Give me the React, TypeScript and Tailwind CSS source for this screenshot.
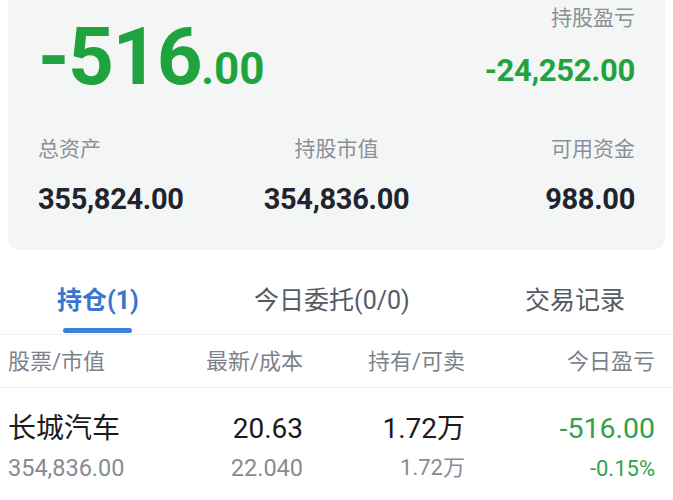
import React from "react";

const font = "font-['Roboto','Noto_Sans_CJK_SC',sans-serif]";

type Holding = {
  name: string;
  value: string;
  price: string;
  cost: string;
  hold: string;
  sell: string;
  pnl: string;
  pct: string;
};

const holdings: Holding[] = [
  {
    name: "长城汽车",
    value: "354,836.00",
    price: "20.63",
    cost: "22.040",
    hold: "1.72万",
    sell: "1.72万",
    pnl: "-516.00",
    pct: "-0.15%",
  },
];

const SummaryCard: React.FC = () => {
  return (
    <div className="mx-2 h-[250px] rounded-b-xl bg-[#f4f6f5] pl-[30px] pr-[30px]">
      <div className="flex items-start justify-between">
        <div className="pt-[17px] text-[#1fa33e] font-bold leading-none">
          <span className="text-[80px] tracking-[-1.5px]">-516</span>
          <span className="text-[44px]">.00</span>
        </div>
        <div className="flex flex-col items-end pt-[8px]">
          <span className="text-[21px] leading-none text-[#8a8f98]">
            持股盈亏
          </span>
          <span className="mt-[26px] text-[31px] font-bold leading-none tracking-[-0.3px] text-[#22a33f]">
            -24,252.00
          </span>
        </div>
      </div>
      <div className="mt-[42px] grid grid-cols-3">
        <div className="flex flex-col items-start">
          <span className="text-[21px] leading-none text-[#8a8f98]">总资产</span>
          <span className="mt-[25px] text-[29px] font-bold leading-none tracking-[-0.3px] text-[#1f2430]">
            355,824.00
          </span>
        </div>
        <div className="flex flex-col items-center">
          <span className="text-[21px] leading-none text-[#8a8f98]">
            持股市值
          </span>
          <span className="mt-[25px] text-[29px] font-bold leading-none tracking-[-0.3px] text-[#1f2430]">
            354,836.00
          </span>
        </div>
        <div className="flex flex-col items-end">
          <span className="text-[21px] leading-none text-[#8a8f98]">
            可用资金
          </span>
          <span className="mt-[25px] text-[29px] font-bold leading-none tracking-[-0.3px] text-[#1f2430]">
            988.00
          </span>
        </div>
      </div>
    </div>
  );
};

const Tabs: React.FC = () => {
  return (
    <div className="mt-[38px] flex items-start justify-between border-b border-[#efefef] pl-[57px] pr-[48px]">
      <div className="flex flex-col items-center">
        <span className="text-[25px] font-bold leading-none text-[#3a76d0]">
          持仓(1)
        </span>
        <div className="mt-[15px] mb-[1px] h-[5px] w-[69px] rounded-full bg-[#3c7fdc]" />
      </div>
      <span className="text-[25px] leading-none text-[#565b63]">
        今日委托(0/0)
      </span>
      <span className="text-[25px] leading-none text-[#565b63]">交易记录</span>
    </div>
  );
};

const HoldingsTable: React.FC = () => {
  return (
    <div>
      <div className="grid grid-cols-[145px_150px_162px_1fr] border-b border-[#f0f0f0] pl-2 pr-[18px] pt-[16px] pb-[14px] text-[22px] leading-none text-[#7d828a]">
        <span>股票/市值</span>
        <span className="text-right">最新/成本</span>
        <span className="text-right">持有/可卖</span>
        <span className="text-right">今日盈亏</span>
      </div>
      {holdings.map((h) => (
        <div
          key={h.name}
          className="grid grid-cols-[145px_150px_162px_1fr] pl-2 pr-[18px] pt-[27px] leading-none"
        >
          <div className="flex flex-col">
            <span className="text-[28px] text-[#1b1b1b]">{h.name}</span>
            <span className="mt-[14px] text-[23.5px] text-[#878c94]">{h.value}</span>
          </div>
          <div className="flex flex-col items-end">
            <span className="text-[28px] text-[#1b1b1b]">{h.price}</span>
            <span className="mt-[14px] text-[23.5px] text-[#878c94]">{h.cost}</span>
          </div>
          <div className="flex flex-col items-end">
            <span className="text-[28px] text-[#1b1b1b]">{h.hold}</span>
            <span className="mt-[14px] text-[22px] text-[#878c94]">{h.sell}</span>
          </div>
          <div className="flex flex-col items-end">
            <span className="text-[28.5px] text-[#34a04c]">{h.pnl}</span>
            <span className="mt-[14px] text-[22px] text-[#34a04c]">{h.pct}</span>
          </div>
        </div>
      ))}
    </div>
  );
};

export default function App() {
  return (
    <div className={`h-[500px] w-[673px] overflow-hidden bg-white ${font}`}>
      <SummaryCard />
      <Tabs />
      <HoldingsTable />
    </div>
  );
}
